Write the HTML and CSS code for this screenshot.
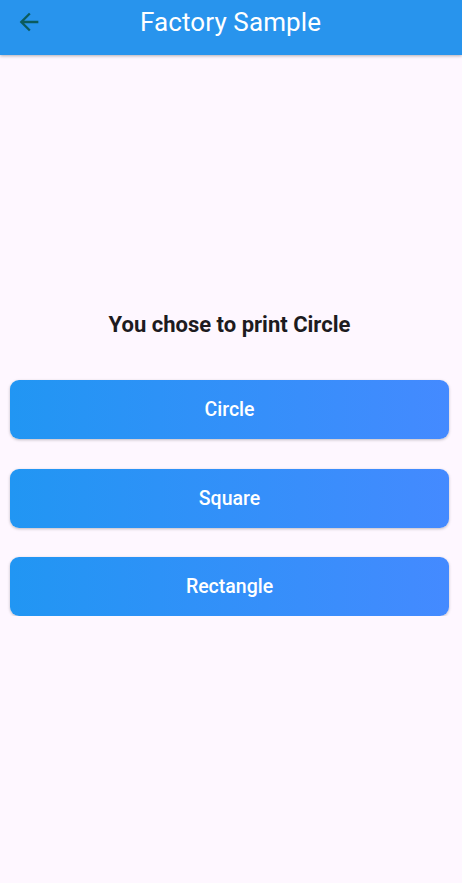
FILE: index.html
```html
<!DOCTYPE html>
<html>
<head>
<meta charset="utf-8">
<link rel="stylesheet" href="styles.css">
</head>
<body>
<header class="appbar">
  <svg class="back" viewBox="0 0 24 24" width="28" height="28"><path d="M20 11H7.83l5.59-5.59L12 4l-8 8 8 8 1.41-1.41L7.83 13H20v-2z" fill="currentColor"/></svg>
  <h1 class="title">Factory Sample</h1>
</header>
<main class="content">
  <p class="chosen">You chose to print Circle</p>
  <div class="buttons">
    <button class="btn">Circle</button>
    <button class="btn">Square</button>
    <button class="btn">Rectangle</button>
  </div>
</main>
</body>
</html>
```
FILE: styles.css
```css
html, body {
  margin: 0;
  padding: 0;
  background: #fef7ff;
  font-family: Roboto, "Noto Sans", sans-serif;
}
.appbar {
  height: 55px;
  background: #2894ed;
  box-shadow: 0 1px 3px rgba(0,0,0,0.3);
  display: flex;
  align-items: center;
  position: relative;
}
.back {
  color: #0b5b5e;
  margin-left: 15px;
  margin-top: -12px;
  flex: none;
}
.title {
  margin: 0;
  margin-top: -12px;
  margin-left: 97px;
  font-size: 26px;
  font-weight: 400;
  color: #fff;
  letter-spacing: 0.1px;
}
.content {
  padding: 0 13px 0 10px;
}
.chosen {
  margin: 257px 0 0 0;
  text-align: center;
  font-size: 22px;
  line-height: 26px;
  font-weight: 700;
  color: #1d1b20;
}
.buttons {
  margin-top: 42px;
  display: flex;
  flex-direction: column;
  gap: 29.5px;
}
.btn {
  height: 59px;
  border: none;
  border-radius: 9px;
  background: linear-gradient(to right, #2196f3, #448aff);
  color: #fff;
  font-family: Roboto, "Noto Sans", sans-serif;
  font-size: 19.5px;
  font-weight: 500;
  box-shadow: 0 1px 3px rgba(0,0,0,0.25);
  padding: 0;
}
```
